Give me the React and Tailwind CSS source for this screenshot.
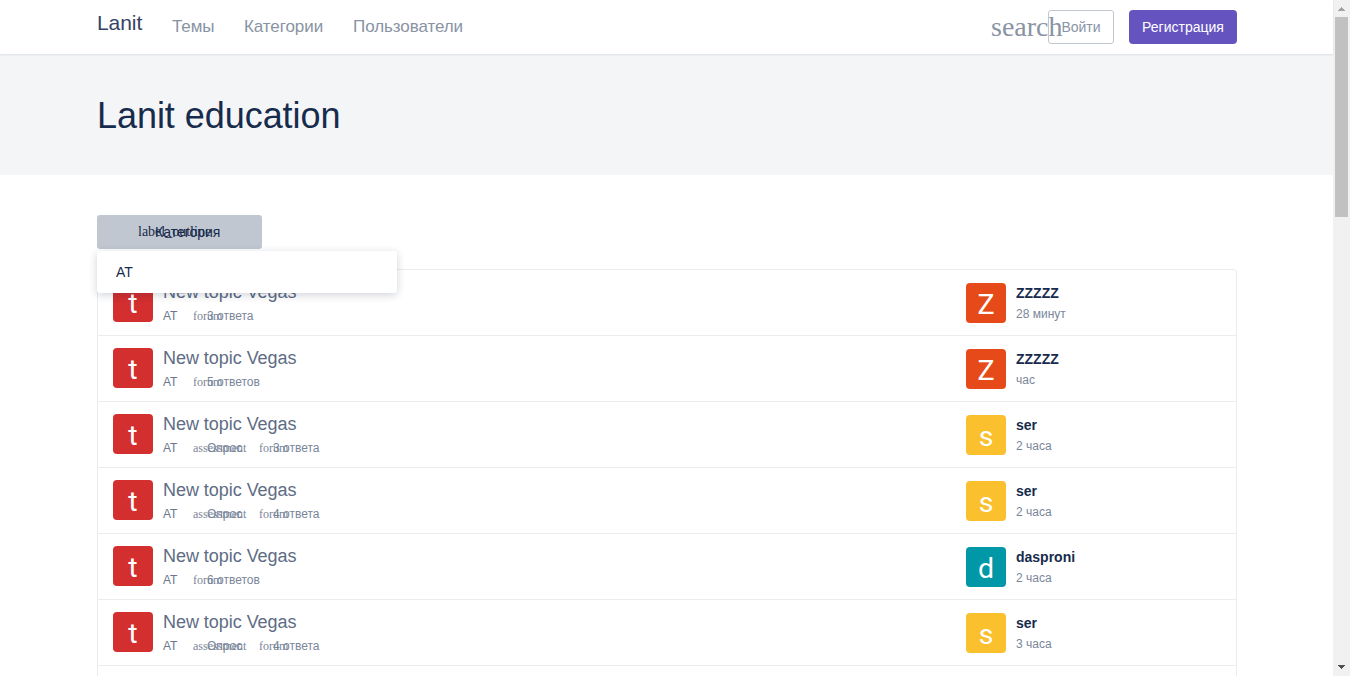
import React from "react";

const topics = [
  { poll: false, replies: "3 ответа", user: "ZZZZZ", letter: "Z", color: "bg-[#e64a19]", time: "28 минут" },
  { poll: false, replies: "5 ответов", user: "ZZZZZ", letter: "Z", color: "bg-[#e64a19]", time: "час" },
  { poll: true, replies: "3 ответа", user: "ser", letter: "s", color: "bg-[#fbc02d]", time: "2 часа" },
  { poll: true, replies: "4 ответа", user: "ser", letter: "s", color: "bg-[#fbc02d]", time: "2 часа" },
  { poll: false, replies: "6 ответов", user: "dasproni", letter: "d", color: "bg-[#0097a7]", time: "2 часа" },
  { poll: true, replies: "4 ответа", user: "ser", letter: "s", color: "bg-[#fbc02d]", time: "3 часа" },
];

function Avatar({ letter, color }) {
  return (
    <div className={`flex h-10 w-10 shrink-0 justify-center overflow-hidden rounded-[4px] font-[Roboto,sans-serif] text-[28.5px] leading-[43px] text-white ${color}`}>
      {letter}
    </div>
  );
}

function Meta({ icon, children }) {
  return (
    <span className="ml-4 flex text-[#7a869a]">
      <span className="w-[14px] overflow-visible whitespace-nowrap font-['Liberation_Serif',serif]">{icon}</span>
      <span>{children}</span>
    </span>
  );
}

function TopicRow({ topic }) {
  return (
    <li className="flex h-[66px] border-b border-[#ebecf0] pl-[15px]">
      <div className="flex w-[853px] gap-[10px] pt-3">
        <Avatar letter="t" color="bg-[#d32f2f]" />
        <div>
          <div className="text-[18px] leading-5 tracking-[-0.04px] text-[#5e6c84]">New topic Vegas</div>
          <div className="mt-[6px] flex text-xs leading-4 text-[#6b778c]">
            <span className="w-[14px] whitespace-nowrap">AT</span>
            {topic.poll && <Meta icon="assessment"><span className="block w-[36px]">Опрос</span></Meta>}
            <Meta icon="forum">{topic.replies}</Meta>
          </div>
        </div>
      </div>
      <div className="flex gap-[10px] pt-[13px]">
        <Avatar letter={topic.letter} color={topic.color} />
        <div>
          <div className="text-sm leading-5 font-bold text-[#172b4d]">{topic.user}</div>
          <div className="mt-[3px] text-xs leading-4 text-[#7a869a]">{topic.time}</div>
        </div>
      </div>
    </li>
  );
}

function Scrollbar() {
  return (
    <div className="flex h-full w-[17px] shrink-0 flex-col items-center bg-[#f1f1f1]">
      <div className="flex h-[17px] items-center">
        <svg width="7" height="4" viewBox="0 0 7 4" className="mt-px fill-[#a3a3a3]" shapeRendering="crispEdges"><path d="M3 0h1v1h1v1h1v1h1v1H0V3h1V2h1V1h1z" /></svg>
      </div>
      <div className="h-[200px] w-[13px] bg-[#c1c1c1]" />
      <div className="mt-auto flex h-[17px] items-center pb-0.5">
        <svg width="7" height="4" viewBox="0 0 7 4" className="fill-[#505050]" shapeRendering="crispEdges"><path d="M0 0h7v1H6v1H5v1H4v1H3V3H2V2H1V1H0z" /></svg>
      </div>
    </div>
  );
}

export default function App() {
  return (
    <div className="flex h-[676px] w-[1350px] overflow-hidden bg-white font-['Liberation_Sans',Arial,sans-serif]">
      <div className="flex w-[1333px] flex-col">
        <header className="relative flex h-[54px] shrink-0 items-start justify-between bg-white pr-24 pl-[97px] shadow-[0_1px_2px_rgba(9,30,66,0.1)]">
          <nav className="flex text-[17px] leading-6 tracking-[-0.08px] text-[#8993a4]">
            <a className="mt-[11px] w-[75px] text-[21px] text-[#344563]">Lanit</a>
            <a className="mt-[15px] w-[72px]">Темы</a>
            <a className="mt-[15px] w-[109px]">Категории</a>
            <a className="mt-[15px]">Пользователи</a>
          </nav>
          <div className="flex pt-[10px] text-sm">
            <span className="w-[57px] font-['Liberation_Serif',serif] text-[28px] leading-[34px] text-[#8993a4]">search</span>
            <button className="h-[34px] w-[66px] rounded-[3px] border border-[#c1c7d0] text-[#8993a4]">Войти</button>
            <button className="ml-[15px] h-[34px] w-[108px] rounded-[4px] bg-[#6554c0] text-white">Регистрация</button>
          </div>
        </header>
        <div className="h-[121px] shrink-0 bg-[#f4f5f7] pt-[38px] pl-[97px]">
          <h1 className="text-[36px] leading-[48px] tracking-[-0.05px] text-[#172b4d]">Lanit education</h1>
        </div>
        <main className="px-[97px] pt-10 pr-24">
          <div className="relative">
            <button className="flex h-[34px] w-[165px] items-center rounded-[3px] bg-[#c1c7d0] pl-[41px] text-sm text-[#172b4d]">
              <span className="w-[17px] whitespace-nowrap font-['Liberation_Serif',serif]">label_outline</span>
              <span>Категория</span>
            </button>
            <div className="absolute top-9 left-0 flex h-[42px] w-[300px] items-center rounded-[3px] bg-white pl-[19px] text-sm text-[#172b4d] shadow-[0_2px_8px_rgba(9,30,66,0.2)]">AT</div>
          </div>
          <ul className="mt-5 rounded-[3px] border border-[#ebecf0]">
            {topics.map((topic, i) => <TopicRow key={i} topic={topic} />)}
            <li className="h-[66px]" />
          </ul>
        </main>
      </div>
      <Scrollbar />
    </div>
  );
}
